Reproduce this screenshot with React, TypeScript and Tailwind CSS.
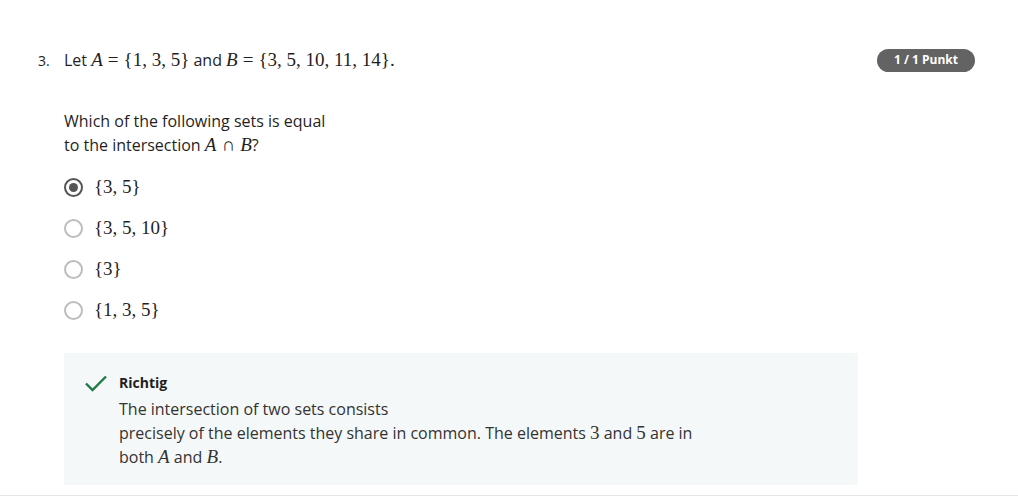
import React from "react";

const M = ({ children }: { children: React.ReactNode }) => (
  <span className="font-['Liberation_Serif',serif] text-[19px]">{children}</span>
);
const V = ({ children }: { children: React.ReactNode }) => (
  <span className="font-['Liberation_Serif',serif] text-[19px] italic">{children}</span>
);
const Op = ({ children }: { children: React.ReactNode }) => (
  <span className="font-['Liberation_Serif',serif] text-[19px] mx-[5px]">{children}</span>
);

const options = ["{3, 5}", "{3, 5, 10}", "{3}", "{1, 3, 5}"];

export default function App() {
  return (
    <div className="w-[1018px] h-[500px] bg-white font-['Open_Sans',sans-serif] text-[#1f1f1f] overflow-hidden">
      <div className="h-[496px] border-b border-[#e5e5e5] pt-[47px]">
        <div className="flex items-start pl-[38px] pr-[43px]">
          <span className="w-[26px] text-[14px] leading-[26px] mt-[1px]">3.</span>
          <div className="flex-1">
            <div className="flex items-center justify-between h-[26px]">
              <p className="text-[16px]">
                Let <V>A</V>
                <Op>=</Op>
                <M>{"{1, 3, 5}"}</M> and <V>B</V>
                <Op>=</Op>
                <M>{"{3, 5, 10, 11, 14}."}</M>
              </p>
              <span className="bg-[#636363] text-white text-[12px] font-bold rounded-full h-[23px] w-[98px] flex items-center justify-center">
                1 / 1 Punkt
              </span>
            </div>

            <div className="mt-[36px] text-[16px] leading-[24px]">
              <p>Which of the following sets is equal</p>
              <p>
                to the intersection <V>A</V>
                <Op>∩</Op>
                <V>B</V>?
              </p>
            </div>

            <div className="mt-[18px] flex flex-col gap-[17px]">
              {options.map((o, i) => (
                <label key={o} className="flex items-center h-[24px] gap-[11px]">
                  <span
                    className={`w-[19px] h-[19px] rounded-full flex items-center justify-center border-2 ${
                      i === 0 ? "border-[#555]" : "border-[#bdbdbd]"
                    }`}
                  >
                    {i === 0 && <span className="w-[9px] h-[9px] rounded-full bg-[#555]" />}
                  </span>
                  <M>{o}</M>
                </label>
              ))}
            </div>

            <div className="mt-[31px] w-[794px] bg-[#f5f8f8] pl-[20px] pt-[20px] pb-[16px] flex gap-[11px]">
              <svg width="24" height="24" viewBox="0 0 24 24" className="mt-[-2px]">
                <path d="M2 12.5 L8.5 19 L22 5.5" fill="none" stroke="#1e7a46" strokeWidth="2.4" />
              </svg>
              <div>
                <p className="text-[14px] font-bold leading-[20px]">Richtig</p>
                <div className="mt-[4px] text-[16px] leading-[24px] text-[#333]">
                  <p>The intersection of two sets consists</p>
                  <p>
                    precisely of the elements they share in common. The elements <M>3</M> and <M>5</M> are in
                  </p>
                  <p>
                    both <V>A</V> and <V>B</V>.
                  </p>
                </div>
              </div>
            </div>
          </div>
        </div>
      </div>
    </div>
  );
}
